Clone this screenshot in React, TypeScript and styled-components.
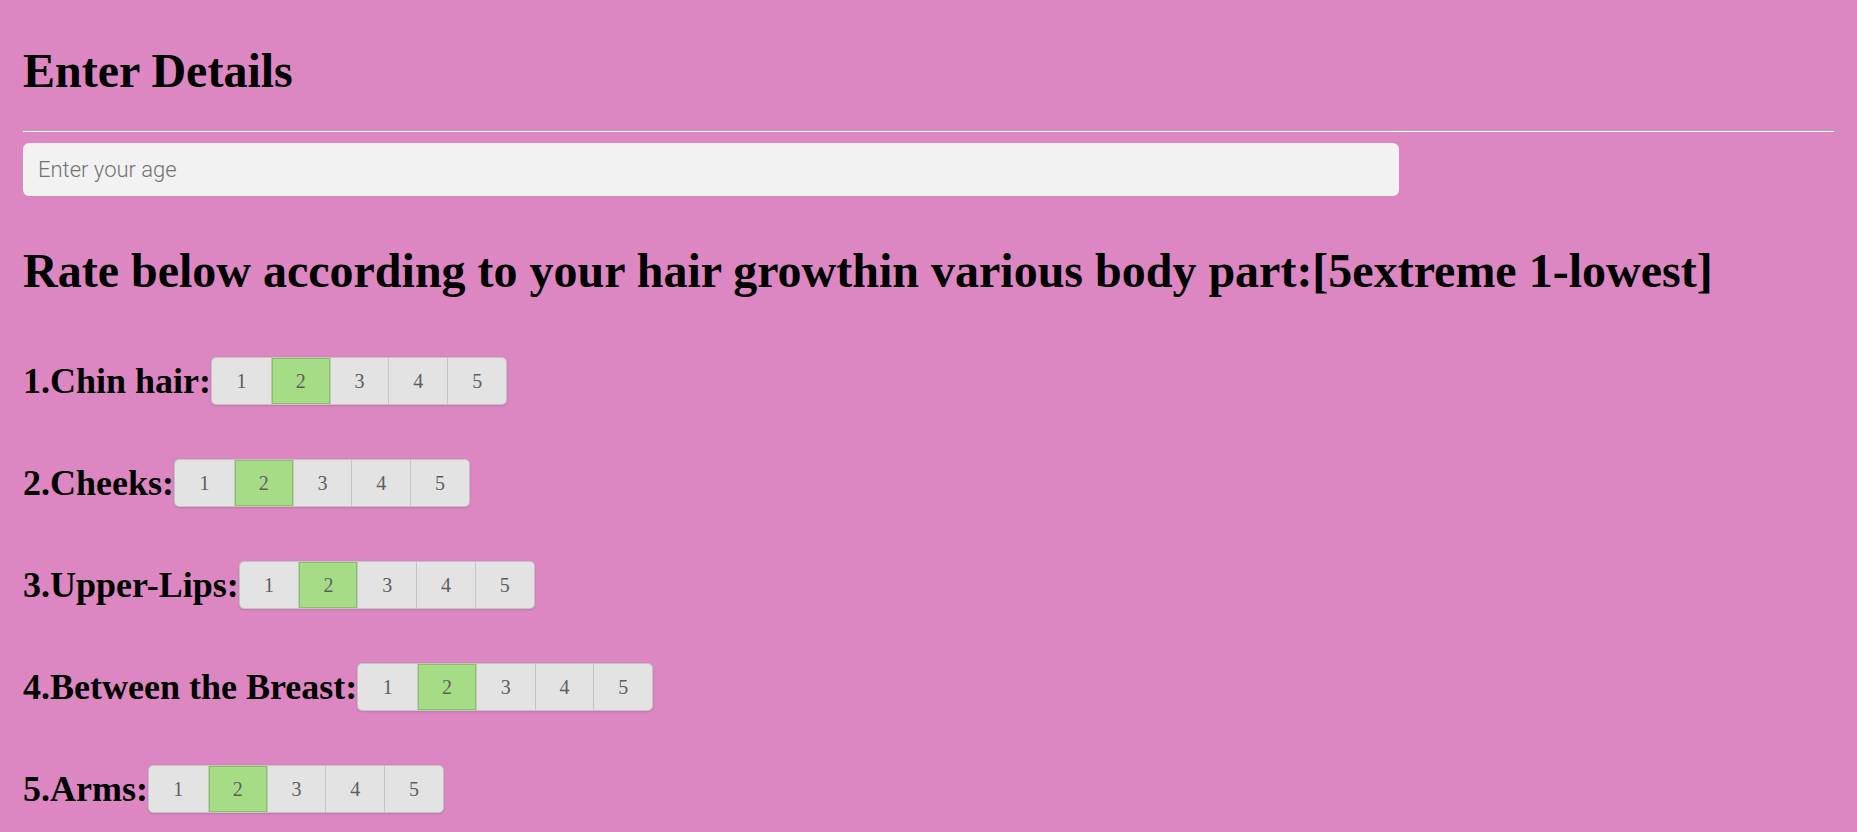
import React from "react";
import styled, { createGlobalStyle } from "styled-components";

const Global = createGlobalStyle`
  html, body {
    margin: 0;
    padding: 0;
    background: #dc87c1;
  }
  body {
    font-family: "Liberation Serif", "Times New Roman", serif;
  }
`;

const Page = styled.div`
  min-height: 832px;
  box-sizing: border-box;
  padding: 43px 23px 0;
  display: flex;
  flex-direction: column;
  background: #dc87c1;
`;

const Title = styled.h1`
  margin: 0;
  font-family: "Liberation Serif", "Times New Roman", serif;
  font-size: 48px;
  line-height: 55px;
  font-weight: 700;
  color: #000;
`;

const Rule = styled.hr`
  margin: 32px 0 0;
  height: 0;
  border: none;
  border-top: 1px solid #a9a9a9;
  border-bottom: 1px solid #f4f4f4;
`;

const AgeInput = styled.input`
  margin-top: 11px;
  width: 1376px;
  height: 53px;
  box-sizing: border-box;
  border: none;
  outline: none;
  border-radius: 6px;
  background: #f2f2f2;
  padding: 0 15px;
  font-family: Roboto, "Noto Sans", sans-serif;
  font-weight: 300;
  font-size: 22px;
  color: #333;
  &::placeholder {
    color: #727272;
  }
`;

const SubTitle = styled(Title)`
  margin-top: 47px;
`;

const Rows = styled.div`
  margin-top: 60px;
  display: flex;
  flex-direction: column;
  gap: 56px;
`;

const Row = styled.div`
  display: flex;
  align-items: center;
  gap: 1px;
`;

const Label = styled.span`
  font-family: "Liberation Serif", "Times New Roman", serif;
  font-size: 36px;
  font-weight: 700;
  color: #000;
  line-height: normal;
`;

const Group = styled.div`
  display: flex;
  border-radius: 4px;
  overflow: hidden;
  box-shadow: 0 0 0 1px #c2c2c2, 0 1px 3px rgba(0, 0, 0, 0.25);
`;

const RateButton = styled.button<{ $active?: boolean; $first?: boolean }>`
  width: 58.8px;
  height: 46px;
  box-sizing: border-box;
  margin: 0;
  padding: 0;
  border: none;
  border-left: ${(p) => (p.$first ? "none" : "1px solid #c6c6c6")};
  background: ${(p) => (p.$active ? "#a6dc86" : "#e3e3e3")};
  ${(p) => (p.$active ? "box-shadow: inset 0 0 0 1px #88c16b;" : "")}
  font-family: "Liberation Serif", "Times New Roman", serif;
  font-size: 20px;
  color: #5e5e5e;
  cursor: pointer;
`;

const parts = ["1.Chin hair:", "2.Cheeks:", "3.Upper-Lips:", "4.Between the Breast:", "5.Arms:"];

export default function App() {
  return (
    <>
      <Global />
      <Page>
        <Title>Enter Details</Title>
        <Rule />
        <AgeInput placeholder="Enter your age" />
        <SubTitle>Rate below according to your hair growthin various body part:[5extreme 1-lowest]</SubTitle>
        <Rows>
          {parts.map((p) => (
            <Row key={p}>
              <Label>{p}</Label>
              <Group>
                {[1, 2, 3, 4, 5].map((n) => (
                  <RateButton key={n} $first={n === 1} $active={n === 2}>
                    {n}
                  </RateButton>
                ))}
              </Group>
            </Row>
          ))}
        </Rows>
      </Page>
    </>
  );
}
